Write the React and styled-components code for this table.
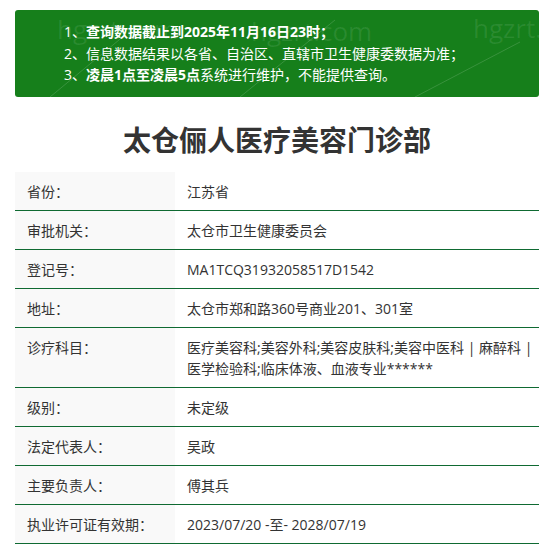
import React from 'react'
import styled, { createGlobalStyle } from 'styled-components'

const GlobalStyle = createGlobalStyle`
  html, body {
    margin: 0;
    padding: 0;
    background: #fff;
  }
  body {
    font-family: "Open Sans", "Noto Sans CJK SC", sans-serif;
    color: #333;
  }
`

const rows = [
  { label: '省份：', value: '江苏省' },
  { label: '审批机关：', value: '太仓市卫生健康委员会' },
  { label: '登记号：', value: 'MA1TCQ31932058517D1542' },
  { label: '地址：', value: '太仓市郑和路360号商业201、301室' },
  {
    label: '诊疗科目：',
    value: ['医疗美容科;美容外科;美容皮肤科;美容中医科 | 麻醉科 |', '医学检验科;临床体液、血液专业******'],
  },
  { label: '级别：', value: '未定级' },
  { label: '法定代表人：', value: '吴政' },
  { label: '主要负责人：', value: '傅其兵' },
  { label: '执业许可证有效期：', value: '2023/07/20 -至- 2028/07/19' },
]

const notices = [
  <>1、<b>查询数据截止到2025年11月16日23时；</b></>,
  <>2、信息数据结果以各省、自治区、直辖市卫生健康委数据为准；</>,
  <>3、<b>凌晨1点至凌晨5点</b>系统进行维护，不能提供查询。</>,
]

export default function App() {
  return (
    <React.Fragment>
      <GlobalStyle />
      <Page>
        <Notice>
          {notices.map((n, i) => (
            <NoticeLine key={i}>{n}</NoticeLine>
          ))}

          {/* faint site watermark over the banner */}
          <Watermark>
            <Mark $x={42} $y={1}>hgzrt.com</Mark>
            <Mark $x={236} $y={3}>hgzrt.com</Mark>
            <Mark $x={458} $y={0}>hgzrt.com</Mark>
            <svg width="524" height="87">
              <g stroke="rgba(255,255,255,0.15)" strokeWidth="1">
                <line x1="35" y1="87" x2="110" y2="25" />
                <line x1="225" y1="87" x2="320" y2="10" />
                <line x1="400" y1="87" x2="505" y2="32" />
              </g>
            </svg>
          </Watermark>
        </Notice>

        <Title>太仓俪人医疗美容门诊部</Title>

        <Table>
          {rows.map((r) => (
            <Row key={r.label}>
              <Label>{r.label}</Label>
              <Value>
                {Array.isArray(r.value)
                  ? r.value.map((line, i) => <Line key={i}>{line}</Line>)
                  : r.value}
              </Value>
            </Row>
          ))}
        </Table>
      </Page>
    </React.Fragment>
  )
}

const Page = styled.div`
  padding: 10px 19px 0 15px;
`

const Notice = styled.div`
  position: relative;
  overflow: hidden;
  background: #167f1b;
  border-radius: 3px;
  padding: 11px 12px 11px 49px;
  color: #fff;
  font-size: 14px;
  line-height: 21.5px;
`

const NoticeLine = styled.div`
  position: relative;
  z-index: 1;
  white-space: nowrap;
  b {
    font-weight: 700;
  }
`

const Title = styled.h1`
  margin: 23px 0 12px;
  text-align: center;
  font-size: 28px;
  line-height: 40px;
  font-weight: 700;
  color: #333;
`

const Table = styled.div`
  display: flex;
  flex-direction: column;
`

const Row = styled.div`
  display: grid;
  grid-template-columns: 160px 1fr;
  border-bottom: 1px solid #0f6a32;
  font-size: 14px;
  line-height: 21px;
`

const Label = styled.div`
  background: #f9f9f9;
  padding: 9px 12px 8px;
  color: #333;
`

const Value = styled.div`
  padding: 9px 12px 8px;
  color: #333;
`

const Line = styled.div`
  white-space: nowrap;
`

const Watermark = styled.div`
  position: absolute;
  inset: 0;
  pointer-events: none;
  svg {
    position: absolute;
    left: 0;
    top: 0;
  }
`

const Mark = styled.span`
  position: absolute;
  left: ${(p) => p.$x}px;
  top: ${(p) => p.$y}px;
  font-family: "Open Sans", sans-serif;
  font-size: 26px;
  line-height: 36px;
  color: rgba(255, 255, 255, 0.09);
  white-space: nowrap;
`
